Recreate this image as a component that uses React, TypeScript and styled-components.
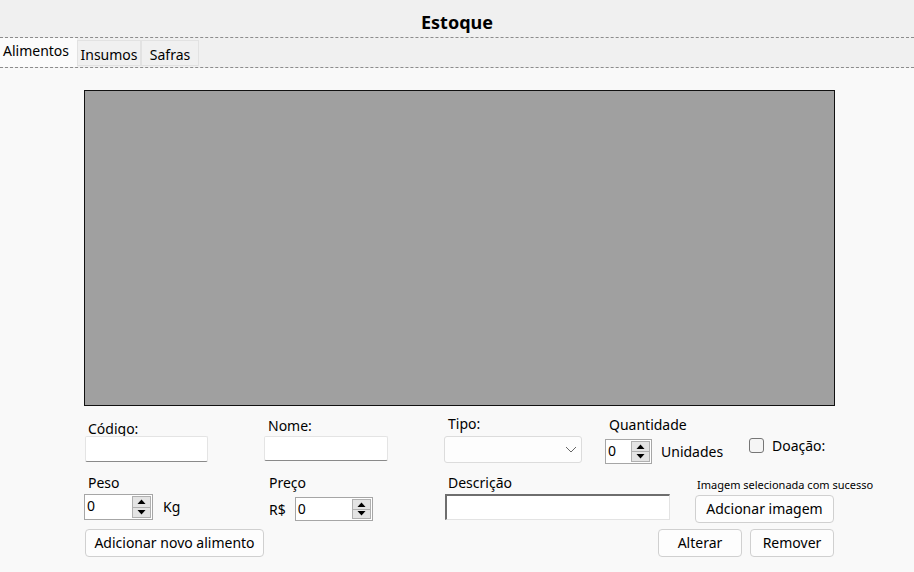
import React from "react";
import styled, { createGlobalStyle } from "styled-components";

const Global = createGlobalStyle`
  html, body { margin: 0; padding: 0; }
  body { font-family: "Noto Sans", "Open Sans", sans-serif; color: #000; background: #f9f9f9; }
  * { box-sizing: border-box; }
`;

const Page = styled.div`
  width: 914px;
  height: 572px;
  background: #f9f9f9;
  display: flex;
  flex-direction: column;
  overflow: hidden;
`;

const Header = styled.header`
  height: 38px;
  background: #f0f0f0;
  border-bottom: 1px dashed #8c8c8c;
  display: flex;
  align-items: center;
  justify-content: center;
`;

const Title = styled.h1`
  margin: 0;
  font-size: 18px;
  font-weight: 700;
  line-height: 24px;
  padding-top: 6px;
`;

const TabBar = styled.nav`
  height: 30px;
  background: #f0f0f0;
  border-bottom: 1px dashed #8c8c8c;
  display: flex;
  align-items: flex-start;
`;

const Tab = styled.div<{ $active?: boolean; $w: number }>`
  width: ${(p) => p.$w}px;
  font-size: 14px;
  line-height: 18px;
  height: ${(p) => (p.$active ? "29px" : "26px")};
  margin-top: ${(p) => (p.$active ? "0" : "2px")};
  padding: ${(p) => (p.$active ? "4px 0 0 3px" : "5px 0 0 0")};
  text-align: ${(p) => (p.$active ? "left" : "center")};
  background: ${(p) => (p.$active ? "#fbfbfb" : "#f0f0f0")};
  border: ${(p) => (p.$active ? "none" : "1px solid #e2e2e2")};
  white-space: nowrap;
`;

const Content = styled.main`
  padding: 22px 0 0 84px;
  display: flex;
  flex-direction: column;
`;

const Canvas = styled.div`
  width: 751px;
  height: 316px;
  background: #a0a0a0;
  border: 1px solid #111;
`;

const Row = styled.div<{ $h: number }>`
  display: flex;
  align-items: flex-start;
  height: ${(p) => p.$h}px;
`;

const Cell = styled.div<{ $w?: number; $top: number; $left?: number }>`
  display: flex;
  flex-direction: column;
  align-items: flex-start;
  width: ${(p) => (p.$w ? `${p.$w}px` : "auto")};
  margin-top: ${(p) => p.$top}px;
  padding-left: ${(p) => p.$left ?? 0}px;
  flex-shrink: 0;
`;

const Label = styled.label<{ $pad?: number; $gap?: number }>`
  font-size: 14px;
  line-height: 17px;
  height: 17px;
  padding-left: ${(p) => p.$pad ?? 4}px;
  margin-bottom: ${(p) => p.$gap ?? 0}px;
  white-space: nowrap;
`;

const TextBox = styled.div<{ $w: number; $h: number }>`
  width: ${(p) => p.$w}px;
  height: ${(p) => p.$h}px;
  background: #fff;
  border: 1px solid #e4e4e4;
  border-bottom: 1px solid #8a8a8a;
  border-radius: 2px;
`;

const InsetBox = styled.div<{ $w: number; $h: number }>`
  width: ${(p) => p.$w}px;
  height: ${(p) => p.$h}px;
  margin-left: 1px;
  background: #fff;
  border-style: solid;
  border-width: 2px 1px 1px 2px;
  border-color: #6e6e6e #e3e3e3 #e3e3e3 #6e6e6e;
`;

const Combo = styled.div`
  width: 138px;
  height: 27px;
  background: #fdfdfd;
  border: 1px solid #dcdcdc;
  border-radius: 3px;
  display: flex;
  align-items: center;
  justify-content: flex-end;
  padding-right: 4px;
`;

const Inline = styled.div<{ $gap: number; $shift?: number }>`
  display: flex;
  align-items: center;
  gap: ${(p) => p.$gap}px;
  font-size: 14px;
  line-height: 17px;
  & > span { position: relative; top: ${(p) => p.$shift ?? 0}px; }
`;

const Spin = styled.div<{ $w: number; $h: number }>`
  width: ${(p) => p.$w}px;
  height: ${(p) => p.$h}px;
  background: #fff;
  border: 1px solid #a6a6a6;
  display: flex;
  align-items: stretch;
  padding: 1px;
`;

const SpinValue = styled.span`
  flex: 1;
  font-size: 14px;
  line-height: 20px;
  padding-left: 1px;
`;

const SpinButtons = styled.div`
  width: 19px;
  display: flex;
  flex-direction: column;
  background: #e6e6e6;
`;

const SpinBtn = styled.div`
  flex: 1;
  border: 1px solid #b0b0b0;
  background: #e4e4e4;
  display: flex;
  align-items: center;
  justify-content: center;
  & + & { border-top: none; }
`;

const Check = styled.span`
  width: 15px;
  height: 15px;
  border: 1px solid #767676;
  border-radius: 3px;
  background: #f5f5f5;
  display: inline-block;
`;

const Small = styled.span`
  font-size: 11px;
  line-height: 14px;
  padding-left: 2px;
  white-space: nowrap;
`;

const Button = styled.button<{ $w: number; $top?: number }>`
  width: ${(p) => p.$w}px;
  height: 28px;
  margin-top: ${(p) => p.$top ?? 0}px;
  font-family: inherit;
  font-size: 14px;
  line-height: 18px;
  color: #000;
  background: #fdfdfd;
  border: 1px solid #d0d0d0;
  border-radius: 4px;
  padding: 0;
`;

const ButtonRow = styled.div`
  width: 750px;
  margin-top: 7px;
  padding-left: 1px;
  display: flex;
  justify-content: space-between;
`;

const RightButtons = styled.div`
  display: flex;
  gap: 8px;
`;

const Arrow = ({ up }: { up?: boolean }) => (
  <svg width="9" height="5" viewBox="0 0 9 5">
    <path d={up ? "M0.5 5 L4.5 0.5 L8.5 5 Z" : "M0.5 0 L4.5 4.5 L8.5 0 Z"} fill="#000" />
  </svg>
);

const Spinner = ({ w, h }: { w: number; h: number }) => (
  <Spin $w={w} $h={h}>
    <SpinValue>0</SpinValue>
    <SpinButtons>
      <SpinBtn>
        <Arrow up />
      </SpinBtn>
      <SpinBtn>
        <Arrow />
      </SpinBtn>
    </SpinButtons>
  </Spin>
);

const Chevron = () => (
  <svg width="12" height="7" viewBox="0 0 12 7">
    <path d="M1 1 L6 6 L11 1" fill="none" stroke="#666" strokeWidth="1" />
  </svg>
);

export default function App() {
  return (
    <Page>
      <Global />
      <Header>
        <Title>Estoque</Title>
      </Header>
      <TabBar>
        <Tab $active $w={77}>Alimentos</Tab>
        <Tab $w={64}>Insumos</Tab>
        <Tab $w={58}>Safras</Tab>
      </TabBar>
      <Content>
        <Canvas />
        <Row $h={58}>
          <Cell $w={180} $top={14} $left={1}>
            <Label $pad={3} $gap={-1}>Código:</Label>
            <TextBox $w={123} $h={26} />
          </Cell>
          <Cell $w={180} $top={11}>
            <Label $gap={2}>Nome:</Label>
            <TextBox $w={124} $h={25} />
          </Cell>
          <Cell $w={161} $top={9}>
            <Label $gap={4}>Tipo:</Label>
            <Combo>
              <Chevron />
            </Combo>
          </Cell>
          <Cell $w={144} $top={10}>
            <Label $gap={6}>Quantidade</Label>
            <Inline $gap={9}>
              <Spinner w={47} h={25} />
              <span>Unidades</span>
            </Inline>
          </Cell>
          <Cell $top={32}>
            <Inline $gap={8} $shift={-1}>
              <Check />
              <span>Doação:</span>
            </Inline>
          </Cell>
        </Row>
        <Row $h={58}>
          <Cell $w={180} $top={10}>
            <Label $gap={3}>Peso</Label>
            <Inline $gap={10} $shift={-1}>
              <Spinner w={69} h={26} />
              <span>Kg</span>
            </Inline>
          </Cell>
          <Cell $w={180} $top={10}>
            <Label $pad={5} $gap={6}>Preço</Label>
            <Inline $gap={9}>
              <Label $pad={5}>R$</Label>
              <Spinner w={78} h={24} />
            </Inline>
          </Cell>
          <Cell $w={251} $top={10}>
            <Label $gap={3}>Descrição</Label>
            <InsetBox $w={225} $h={26} />
          </Cell>
          <Cell $top={14}>
            <Small>Imagem selecionada com sucesso</Small>
            <Button $w={139} $top={3}>Adcionar imagem</Button>
          </Cell>
        </Row>
        <ButtonRow>
          <Button $w={179}>Adicionar novo alimento</Button>
          <RightButtons>
            <Button $w={84}>Alterar</Button>
            <Button $w={84}>Remover</Button>
          </RightButtons>
        </ButtonRow>
      </Content>
    </Page>
  );
}
